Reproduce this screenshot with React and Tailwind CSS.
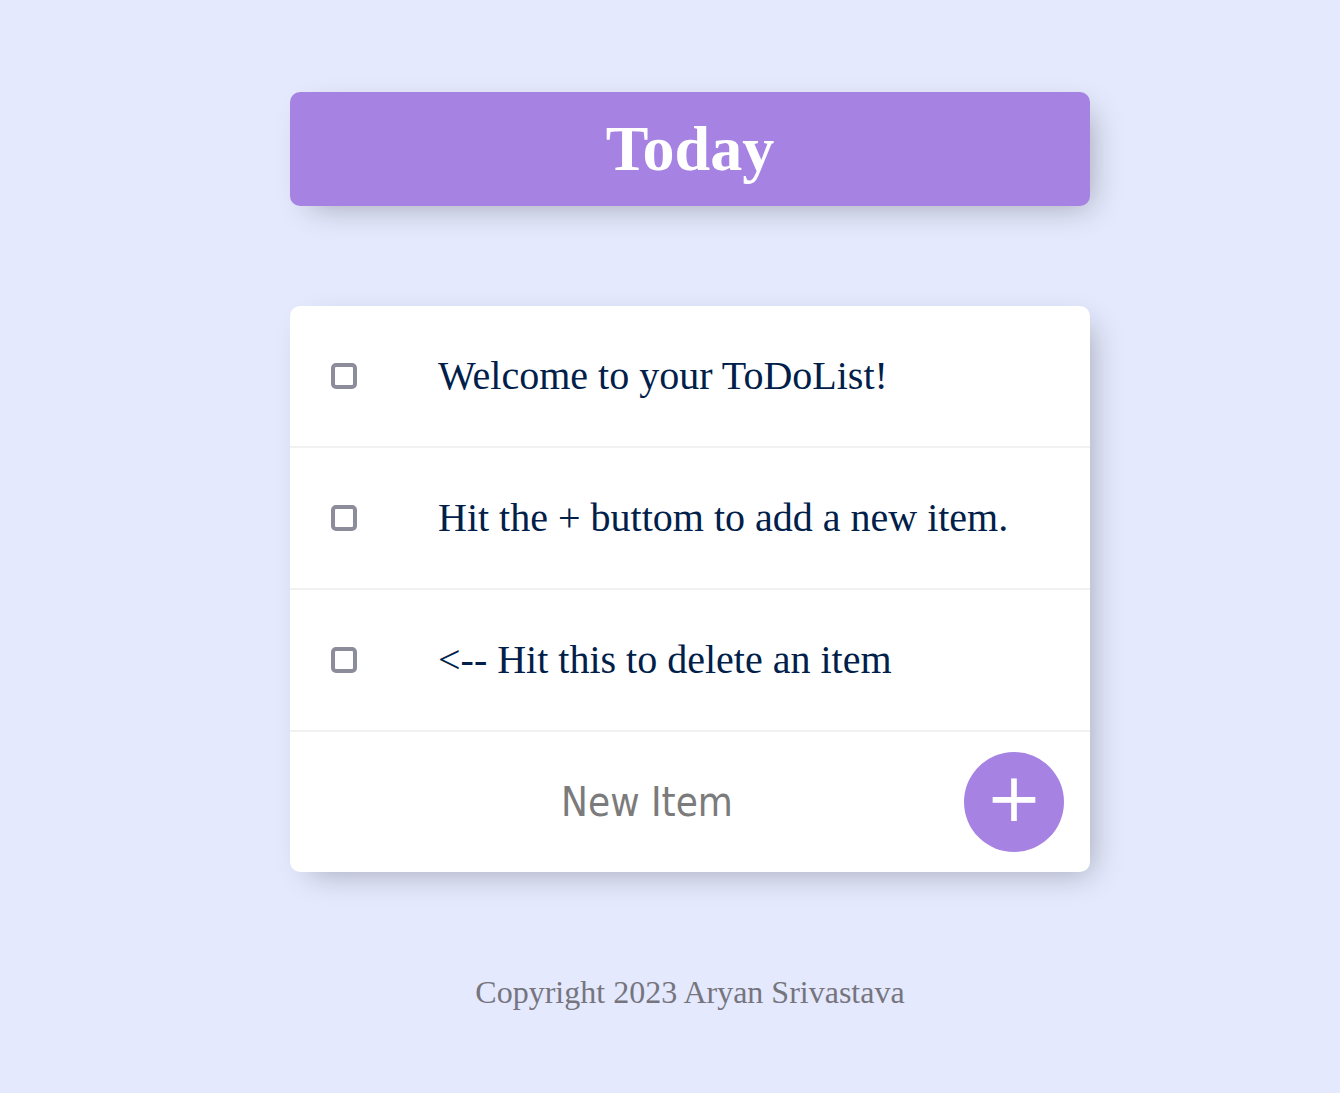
import React from 'react'

const items = [
    "Welcome to your ToDoList!",
    "Hit the + buttom to add a new item.",
    "<-- Hit this to delete an item",
]

export default function App() {
    return (
        <div className="min-h-[1093px] bg-[#e4e9fd] pl-[40px] pt-[92px] pb-10" style={{ fontFamily: '"Liberation Serif", serif' }}>
            <div className="mx-auto w-[800px] rounded-[10px] bg-[#a683e3] py-5 text-center shadow-[10px_10px_30px_-10px_rgba(0,0,0,0.3)]">
                <h1 className="text-[64px] font-bold leading-[74px] text-white">Today</h1>
            </div>

            <div className="mx-auto mt-[100px] w-[800px] rounded-[10px] bg-white shadow-[10px_10px_30px_-10px_rgba(0,0,0,0.3)]">
                {items.map((text) => (
                    <div key={text} className="flex h-[142px] items-center border-b-2 border-[#f1f1f1]">
                        <div className="ml-[41px] h-[26px] w-[26px] rounded-[5px] border-4 border-[#8d8c9b]"></div>
                        <p className="ml-[81px] text-[40px] leading-none text-[#00204a]">{text}</p>
                    </div>
                ))}
                <div className="flex h-[140px] items-center">
                    <input
                        type="text"
                        placeholder="New Item"
                        className="ml-[34px] h-[120px] w-[626px] pl-5 text-center text-[40px] outline-none placeholder:text-[#7b7b7b]"
                        style={{ fontFamily: '"DejaVu Sans Condensed", sans-serif' }}
                    />
                    <button
                        className="ml-[14px] flex h-[100px] w-[100px] items-center justify-center rounded-full bg-[#a683e3] pb-2 text-[68px] leading-none text-white"
                        style={{ fontFamily: '"DejaVu Sans", sans-serif' }}
                    >
                        +
                    </button>
                </div>
            </div>

            <footer className="mt-[96px] text-center text-[32px] text-[#76757e]">
                Copyright 2023 Aryan Srivastava
            </footer>
        </div>
    )
}
